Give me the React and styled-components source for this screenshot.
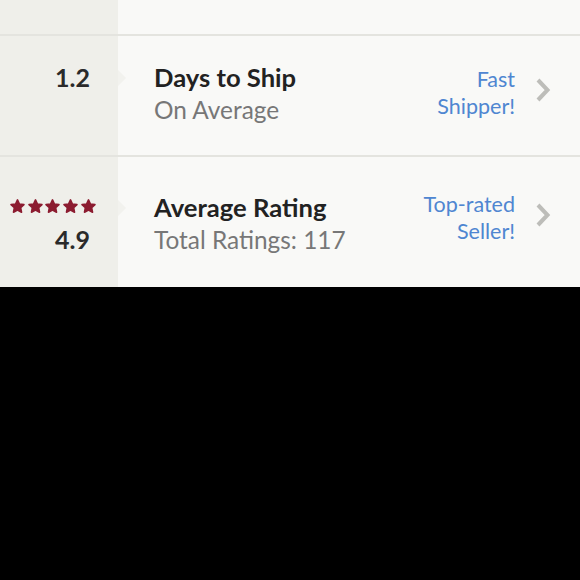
import React from "react";
import styled, { createGlobalStyle } from "styled-components";

const Global = createGlobalStyle`
  html, body {
    margin: 0;
    padding: 0;
    background: #000;
  }
  body {
    font-family: "Lato", "Open Sans", sans-serif;
  }
`;

const stats = [
  { value: "1.2", title: "Days to Ship", sub: "On Average", badge: ["Fast", "Shipper!"], height: 119, pad: 26, badgeShift: 4 },
  { value: "4.9", stars: 5, title: "Average Rating", sub: "Total Ratings: 117", badge: ["Top-rated", "Seller!"], height: 134, pad: 35, badgeShift: -1 },
];

export default function App() {
  return (
    <>
      <Global />
      <Panel>
        <Row $height={34} />
        {stats.map((s) => (
          <Row key={s.title} $height={s.height} $pad={s.pad}>
            <Main>
              <ScoreCell $notch>
                {s.stars ? (
                  <Stars>
                    {Array.from({ length: s.stars }).map((_, i) => (
                      <Star key={i} />
                    ))}
                  </Stars>
                ) : (
                  <Value>{s.value}</Value>
                )}
              </ScoreCell>
              <Title>{s.title}</Title>
              <ScoreCell>{s.stars && <Value>{s.value}</Value>}</ScoreCell>
              <Sub>{s.sub}</Sub>
            </Main>
            <Badge $shift={s.badgeShift}>
              {s.badge.map((b) => (
                <span key={b}>{b}</span>
              ))}
            </Badge>
            <Chevron shift={s.badgeShift} />
          </Row>
        ))}
      </Panel>
    </>
  );
}

function Star() {
  return (
    <svg width="15" height="15" viewBox="0 0 24 24">
      <path
        d="M12 1.5l3.1 6.6 7.2.9-5.3 5 1.4 7.1L12 17.6l-6.4 3.5 1.4-7.1-5.3-5 7.2-.9z"
        fill="#8c1c30"
        stroke="#8c1c30"
        strokeWidth="2.6"
        strokeLinejoin="round"
      />
    </svg>
  );
}

function Chevron({ shift }) {
  return (
    <ChevronBox $shift={shift}>
      <svg width="16" height="24" viewBox="0 0 16 24">
        <path d="M3 2l9.5 10-9.5 10" fill="none" stroke="#bdbdb9" strokeWidth="4" />
      </svg>
    </ChevronBox>
  );
}

const Panel = styled.div`
  height: 287px;
  overflow: hidden;
  background: #f9f9f7;
`;

const Row = styled.div`
  display: flex;
  align-items: flex-start;
  box-sizing: border-box;
  height: ${(p) => p.$height + 2}px;
  padding-top: ${(p) => p.$pad || 0}px;
  border-bottom: 2px solid #e4e4df;
  background: linear-gradient(to right, #efefea 0, #efefea 118px, #f9f9f7 118px);
  &:last-child {
    border-bottom: none;
  }
`;

const Main = styled.div`
  flex: 1;
  display: grid;
  grid-template-columns: 118px 1fr;
  grid-auto-rows: 32px;
  column-gap: 36px;
`;

const ScoreCell = styled.div`
  position: relative;
  display: flex;
  align-items: center;
  justify-content: flex-end;
  padding-right: 28px;
  ${(p) =>
    p.$notch &&
    `
    &::after {
      content: "";
      position: absolute;
      right: -8px;
      top: 50%;
      margin-top: -8px;
      border-top: 8px solid transparent;
      border-bottom: 8px solid transparent;
      border-left: 8px solid #f2f2ee;
    }
  `}
`;

const Stars = styled.div`
  display: flex;
  gap: 2.8px;
  margin-right: -6px;
  margin-top: -4px;
`;

const Value = styled.div`
  font-size: 25px;
  font-weight: 700;
  color: #2a2a2a;
  line-height: 32px;
  margin-top: -3px;
`;

const Title = styled.div`
  font-size: 25.6px;
  font-weight: 700;
  color: #222;
  line-height: 32px;
  margin-top: -1px;
  white-space: nowrap;
`;

const Sub = styled.div`
  font-size: 24.4px;
  color: #777;
  line-height: 32px;
  white-space: nowrap;
`;

const Badge = styled.div`
  display: flex;
  flex-direction: column;
  align-items: flex-end;
  margin-top: ${(p) => p.$shift}px;
  font-size: 21.5px;
  line-height: 27px;
  color: #4f86d1;
  margin-right: 20px;
`;

const ChevronBox = styled.div`
  width: 16px;
  margin-top: ${(p) => p.$shift + 12}px;
  margin-right: 29px;
  display: flex;
`;
